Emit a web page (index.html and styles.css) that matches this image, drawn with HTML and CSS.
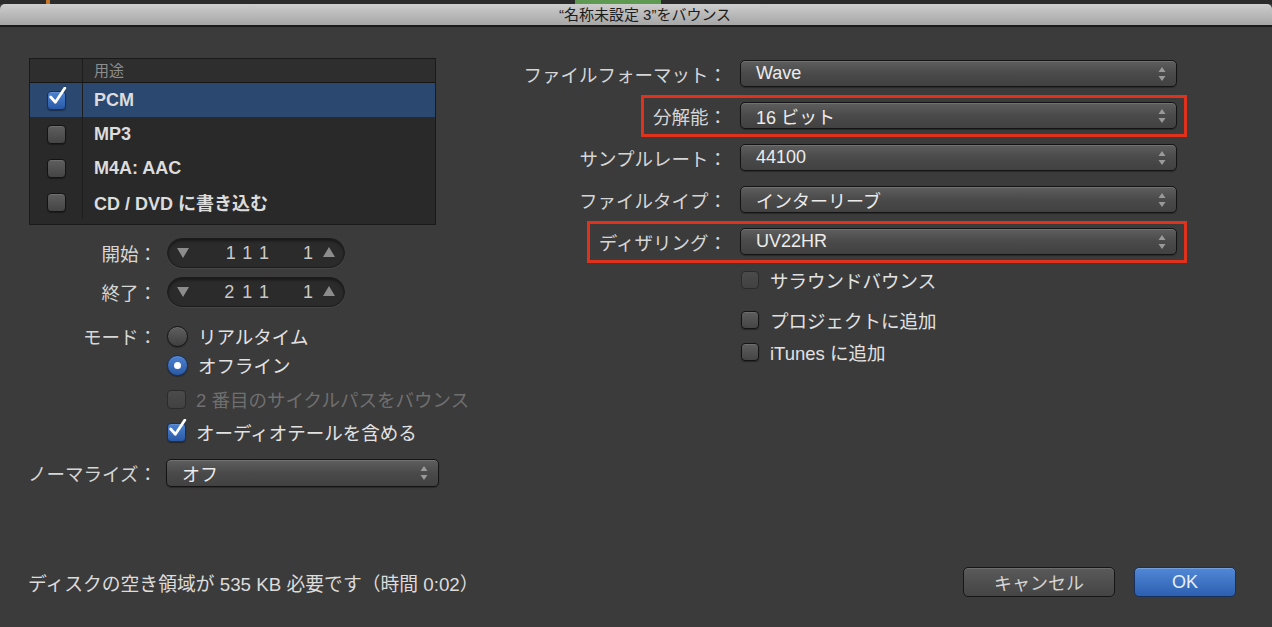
FILE: index.html
```html
<!DOCTYPE html>
<html lang="ja">
<head>
    <meta charset="utf-8">
    <title>“名称未設定 3”をバウンス</title>
    <link rel="stylesheet" href="styles.css">
</head>
<body>
<div class="strip">
    <span class="clip orange"></span>
    <span class="clip green"></span>
</div>
<div class="window">
    <div class="titlebar">“名称未設定 3”をバウンス</div>

    <div class="content">
        <div class="left">
            <div class="dest">
                <div class="dest-head">
                    <span class="col-check"></span>
                    <span class="col-name">用途</span>
                </div>
                <div class="dest-row sel">
                    <span class="col-check"><span class="check on"><svg viewBox="0 0 20 20"><path d="M3.5 9.5 L8 14.5 L17 1"/></svg></span></span>
                    <span class="col-name">PCM</span>
                </div>
                <div class="dest-row">
                    <span class="col-check"><span class="check"></span></span>
                    <span class="col-name">MP3</span>
                </div>
                <div class="dest-row">
                    <span class="col-check"><span class="check"></span></span>
                    <span class="col-name">M4A: AAC</span>
                </div>
                <div class="dest-row">
                    <span class="col-check"><span class="check"></span></span>
                    <span class="col-name">CD / DVD に書き込む</span>
                </div>
            </div>

            <div class="opt opt-spin1">
                <span class="lbl">開始：</span>
                <div class="spin">
                    <span class="tri down"></span>
                    <span class="digits">111&nbsp;&nbsp;1</span>
                    <span class="tri up"></span>
                </div>
            </div>
            <div class="opt opt-spin2">
                <span class="lbl">終了：</span>
                <div class="spin">
                    <span class="tri down"></span>
                    <span class="digits">211&nbsp;&nbsp;1</span>
                    <span class="tri up"></span>
                </div>
            </div>
            <div class="opt opt-radio1">
                <span class="lbl">モード：</span>
                <span class="radio"></span>
                <span class="txt">リアルタイム</span>
            </div>
            <div class="opt opt-radio2">
                <span class="lbl"></span>
                <span class="radio on"></span>
                <span class="txt">オフライン</span>
            </div>
            <div class="opt opt-chk1">
                <span class="lbl"></span>
                <span class="check off"></span>
                <span class="txt dim">2 番目のサイクルパスをバウンス</span>
            </div>
            <div class="opt opt-chk2">
                <span class="lbl"></span>
                <span class="check on"><svg viewBox="0 0 20 20"><path d="M3.5 9.5 L8 14.5 L17 1"/></svg></span>
                <span class="txt">オーディオテールを含める</span>
            </div>
            <div class="opt opt-norm">
                <span class="lbl">ノーマライズ：</span>
                <div class="popup small">
                    <span class="val">オフ</span>
                    <svg class="arrows" viewBox="0 0 8 14"><path d="M4 0L7.5 5H0.5z M0.5 9H7.5L4 14z"/></svg>
                </div>
            </div>
        </div>

        <div class="right">
            <div class="row">
                <span class="lbl">ファイルフォーマット：</span>
                <div class="popup">
                    <span class="val">Wave</span>
                    <svg class="arrows" viewBox="0 0 8 14"><path d="M4 0L7.5 5H0.5z M0.5 9H7.5L4 14z"/></svg>
                </div>
            </div>
            <div class="row">
                <div class="hl">
                    <span class="lbl">分解能：</span>
                    <div class="popup">
                        <span class="val">16 ビット</span>
                        <svg class="arrows" viewBox="0 0 8 14"><path d="M4 0L7.5 5H0.5z M0.5 9H7.5L4 14z"/></svg>
                    </div>
                </div>
            </div>
            <div class="row">
                <span class="lbl">サンプルレート：</span>
                <div class="popup">
                    <span class="val">44100</span>
                    <svg class="arrows" viewBox="0 0 8 14"><path d="M4 0L7.5 5H0.5z M0.5 9H7.5L4 14z"/></svg>
                </div>
            </div>
            <div class="row">
                <span class="lbl">ファイルタイプ：</span>
                <div class="popup">
                    <span class="val">インターリーブ</span>
                    <svg class="arrows" viewBox="0 0 8 14"><path d="M4 0L7.5 5H0.5z M0.5 9H7.5L4 14z"/></svg>
                </div>
            </div>
            <div class="row">
                <div class="hl">
                    <span class="lbl">ディザリング：</span>
                    <div class="popup">
                        <span class="val">UV22HR</span>
                        <svg class="arrows" viewBox="0 0 8 14"><path d="M4 0L7.5 5H0.5z M0.5 9H7.5L4 14z"/></svg>
                    </div>
                </div>
            </div>

            <div class="rchecks">
                <div class="rchk r1">
                    <span class="check off"></span>
                    <span class="txt dim">サラウンドバウンス</span>
                </div>
                <div class="rchk r2">
                    <span class="check"></span>
                    <span class="txt">プロジェクトに追加</span>
                </div>
                <div class="rchk r3">
                    <span class="check"></span>
                    <span class="txt">iTunes に追加</span>
                </div>
            </div>
        </div>
    </div>

    <div class="footer">
        <span class="need">ディスクの空き領域が 535 KB 必要です（時間 0:02）</span>
        <span class="btn cancel">キャンセル</span>
        <span class="btn ok">OK</span>
    </div>
</div>
</body>
</html>
```

FILE: styles.css
```css
* {
    margin: 0;
    padding: 0;
    box-sizing: border-box;
}

body {
    width: 1272px;
    height: 627px;
    overflow: hidden;
    background: #3b3b3b;
    font-family: "Liberation Sans", "Noto Sans CJK JP", sans-serif;
    color: #e4e4e4;
}

/* bit of the app behind the sheet */
.strip {
    height: 4px;
    background: #2b2b2b;
    display: flex;
}

.strip .clip {
    height: 4px;
}

.strip .orange {
    width: 4px;
    margin-left: 46px;
    background: #c07a2a;
}

.strip .green {
    width: 86px;
    margin-left: 525px;
    background: #5f9a52;
}

.window {
    height: 623px;
    display: flex;
    flex-direction: column;
}

.titlebar {
    height: 23px;
    background: linear-gradient(#cdcdcd, #a6a6a6);
    border-radius: 5px 5px 0 0;
    border-bottom: 2px solid #1b1b1b;
    text-align: center;
    font-size: 15px;
    line-height: 21px;
    color: #1c1c1c;
    padding-left: 18px;
}

.content {
    flex: 1;
    display: flex;
}

/* ---------- left side ---------- */

.left {
    width: 470px;
    padding-top: 31px;
}

.dest {
    margin-left: 29px;
    width: 407px;
    background: #292929;
    border: 1px solid #1a1a1a;
    padding-bottom: 5px;
}

.dest-head {
    height: 24px;
    display: flex;
    background: #2e2e2e;
    border-bottom: 1px solid #151515;
    font-size: 15px;
    color: #8d8d8d;
    line-height: 22px;
}

.dest-row {
    height: 34px;
    display: flex;
    font-size: 18px;
    font-weight: bold;
    color: #dcdcdc;
}

.dest-row.sel {
    background: #2b4870;
}

.col-check {
    width: 53px;
    border-right: 1px solid #1d1d1d;
    display: flex;
    align-items: center;
    justify-content: center;
}

.col-name {
    padding-left: 11px;
    display: flex;
    align-items: center;
}

.check {
    width: 19px;
    height: 19px;
    border-radius: 4px;
    border: 1px solid #141414;
    background: linear-gradient(#5e5e5e, #454545);
    box-shadow: inset 0 1px 0 rgba(255, 255, 255, .1), 0 1px 1px rgba(0, 0, 0, .35);
    position: relative;
    flex: none;
}

.check.on {
    background: linear-gradient(#4d83d2, #2a59a6);
    border-color: #16305a;
}

.check.off {
    background: linear-gradient(#4b4b4b, #414141);
    border-color: #2b2b2b;
    box-shadow: none;
}

.check svg {
    position: absolute;
    left: -1px;
    top: -5px;
    width: 21px;
    height: 21px;
}

.check svg path {
    fill: none;
    stroke: #fff;
    stroke-width: 2.6;
    stroke-linecap: round;
    stroke-linejoin: round;
}

.opt {
    display: flex;
    align-items: center;
    height: 22px;
}

.opt .lbl {
    width: 157px;
    text-align: right;
    font-size: 18.5px;
    color: #d6d6d6;
    margin-right: 10px;
    flex: none;
}

.opt-spin1 {
    margin-top: 13px;
    height: 30px;
}

.opt-spin2 {
    margin-top: 9px;
    height: 30px;
}

.opt-radio1 {
    margin-top: 18px;
}

.opt-radio2 {
    margin-top: 7px;
}

.opt-chk1 {
    margin-top: 12px;
}

.opt-chk2 {
    margin-top: 11px;
}

.opt-norm {
    margin-top: 16px;
    height: 28px;
}

.opt-norm .lbl {
    margin-right: 9px;
}

.opt .txt {
    font-size: 18.5px;
    color: #e2e2e2;
    margin-left: 10px;
}

.txt.dim {
    color: #6f6f6f;
}

.spin {
    width: 178px;
    height: 30px;
    border-radius: 15px;
    background: #2b2b2b;
    border: 1px solid #1c1c1c;
    box-shadow: inset 0 2px 3px rgba(0, 0, 0, .45), 0 1px 0 rgba(255, 255, 255, .06);
    display: flex;
    align-items: center;
    padding: 0 9px 0 9px;
}

.spin .digits {
    margin-left: auto;
    margin-right: 2px;
    font-size: 18px;
    letter-spacing: 8px;
    color: #c9c9c9;
}

.tri {
    width: 0;
    height: 0;
    border-left: 6px solid transparent;
    border-right: 6px solid transparent;
}

.tri.down {
    border-top: 10px solid #8c8c8c;
}

.tri.up {
    border-bottom: 10px solid #8c8c8c;
    margin-bottom: 3px;
}

.radio {
    width: 21px;
    height: 21px;
    border-radius: 50%;
    border: 1px solid #151515;
    background: linear-gradient(#5e5e5e, #404040);
    box-shadow: inset 0 1px 0 rgba(255, 255, 255, .1), 0 1px 1px rgba(0, 0, 0, .35);
    display: flex;
    align-items: center;
    justify-content: center;
    flex: none;
}

.radio.on {
    background: linear-gradient(#4d82d0, #2a59a5);
    border-color: #16305a;
}

.radio.on::after {
    content: "";
    width: 7px;
    height: 7px;
    border-radius: 50%;
    background: #fff;
}

/* ---------- popups ---------- */

.popup {
    width: 437px;
    height: 27px;
    border: 1px solid #141414;
    border-radius: 5px;
    background: linear-gradient(#5e5e5e, #4a4a4a 50%, #414141);
    box-shadow: inset 0 1px 0 rgba(255, 255, 255, .13), 0 1px 1px rgba(0, 0, 0, .3);
    display: flex;
    align-items: center;
    padding: 0 10px 0 15px;
    font-size: 18px;
    color: #ececec;
    flex: none;
}

.popup.small {
    width: 273px;
    height: 28px;
}

.popup .val {
    flex: 1;
}

.arrows {
    width: 8px;
    height: 14px;
}

.arrows path {
    fill: #9a9a9a;
}

/* ---------- right side ---------- */

.right {
    flex: 1;
    padding-top: 33px;
    padding-right: 95px;
    display: flex;
    flex-direction: column;
    align-items: flex-end;
}

.row {
    display: flex;
    align-items: center;
    gap: 13px;
    height: 27px;
    margin-bottom: 15px;
}

.row .lbl,
.hl .lbl {
    font-size: 18.5px;
    color: #d6d6d6;
}

.hl {
    display: flex;
    align-items: center;
    gap: 13px;
    position: relative;
}

.hl::after {
    content: "";
    position: absolute;
    top: -7px;
    right: -10px;
    bottom: -8px;
    left: -12px;
    border: 3px solid #e0311c;
}

.rchecks {
    width: 437px;
}

.rchk {
    display: flex;
    align-items: center;
    height: 20px;
    padding-left: 1px;
}

.rchk .check {
    width: 18px;
    height: 18px;
}

.rchk .txt {
    font-size: 18.5px;
    margin-left: 11px;
    color: #e2e2e2;
}

.rchk.r2 {
    margin-top: 20px;
}

.rchk.r3 {
    margin-top: 12px;
}

/* ---------- footer ---------- */

.footer {
    height: 60px;
    margin-bottom: 15px;
    display: flex;
    align-items: center;
    padding: 0 36px 0 28px;
}

.need {
    font-size: 18.8px;
    color: #dcdcdc;
    margin-right: auto;
}

.btn {
    height: 30px;
    border-radius: 5px;
    font-size: 18px;
    display: flex;
    align-items: center;
    justify-content: center;
}

.btn.cancel {
    width: 152px;
    border: 1px solid #161616;
    background: linear-gradient(#5a5a5a, #444444);
    box-shadow: inset 0 1px 0 rgba(255, 255, 255, .12);
    color: #d4d4d4;
    margin-right: 19px;
}

.btn.ok {
    width: 102px;
    border: 1px solid #17305c;
    background: linear-gradient(#5188d6, #2d5fb0);
    box-shadow: inset 0 1px 0 rgba(255, 255, 255, .2);
    color: #e9eef7;
}
```
